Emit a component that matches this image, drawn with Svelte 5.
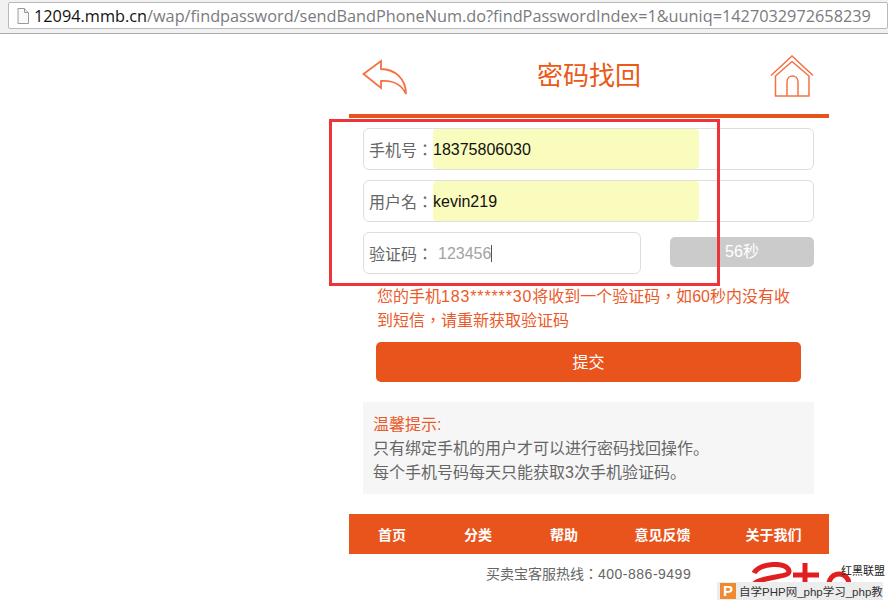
<script>
  const fields = [
    { label: '手机号：', value: '18375806030' },
    { label: '用户名：', value: 'kevin219' }
  ];
  const nav = ['首页', '分类', '帮助', '意见反馈', '关于我们'];
</script>

<div class="urlbar">
  <div class="url">
    <svg class="doc" width="12" height="16" viewBox="0 0 12 16">
      <path d="M1 .5h6.5l4 4v11H1z" fill="#fafafa" stroke="#9a9a9a" />
      <path d="M7.5 .5v4h4" fill="#e4e4e4" stroke="#9a9a9a" />
    </svg>
    <span class="host">12094.mmb.cn</span><span class="rest">/wap/findpassword/sendBandPhoneNum.do?findPasswordIndex=1&amp;uuniq=1427032972658239</span>
  </div>
</div>

<div class="page">
  <header>
    <svg class="back" width="46" height="36" viewBox="0 0 46 36" fill="none" stroke="#f47145" stroke-width="1.8">
      <path d="M1.5 15 L19 2 V10 C33 10 44 20 44 35 C40 26 31 21 19 22 V29 Z" />
    </svg>
    <h1>密码找回</h1>
    <svg class="home" width="44" height="42" viewBox="0 0 44 42" fill="none" stroke="#f47145" stroke-width="1.5">
      <path d="M1 20.5 L22 1 L43 20.5" />
      <path d="M5.5 20.5 V41 H39 V20.5 M22 6.5 L39 21 M22 6.5 L5.5 21" />
      <path d="M17 41 V27 C17 19 28 19 28 27 V41" />
    </svg>
  </header>

  <form>
    {#each fields as f}
      <div class="field">
        <span class="label">{f.label}</span>
        <span class="fill">{f.value}</span>
      </div>
    {/each}
    <div class="code-row">
      <div class="field code">
        <span class="label">验证码：</span>
        <span class="typed">123456</span><i class="caret"></i>
      </div>
      <div class="timer">56秒</div>
    </div>
  </form>

  <p class="notice">您的手机<span class="nums">183******30</span>将收到一个验证码，如60秒内没有收到短信，请重新获取验证码</p>
  <div class="submit">提交</div>

  <div class="tips">
    <div class="tips-title">温馨提示:</div>
    <div>只有绑定手机的用户才可以进行密码找回操作。</div>
    <div>每个手机号码每天只能获取3次手机验证码。</div>
  </div>

  <nav>
    {#each nav as item}
      <span>{item}</span>
    {/each}
  </nav>
  <div class="hotline">买卖宝客服热线：<span class="tel">400-886-9499</span></div>
</div>

<!-- annotation and watermarks sit over the page -->
<div class="redbox"></div>
<svg class="logo" width="100" height="34" viewBox="0 0 100 34" fill="none" stroke="#e02020" stroke-width="5">
  <path d="M3 11 C8 1 36 -1 38 9 C39 16 10 14 3 22" />
  <path d="M54 1 V22 M42 13 H68" />
  <circle cx="88" cy="22" r="10" />
</svg>
<div class="logo-text">红黑联盟</div>
<div class="wm">
  <span class="p">P</span>
  <span class="wm-text">自学PHP网_php学习_php教</span>
</div>

<style>
  :global(body) {
    margin: 0;
    background: #fff;
    overflow: hidden;
  }
  :global(#app) {
    font-family: "Liberation Sans", "Noto Sans CJK SC", sans-serif;
    height: 606px;
    position: relative;
    overflow: hidden;
  }
  .urlbar {
    height: 34px;
    box-sizing: border-box;
    padding: 2px 0 0 8px;
    background: #f1f1f1;
    border-bottom: 1px solid #acacac;
  }
  .url {
    height: 27px;
    box-sizing: border-box;
    background: #fff;
    border: 1px solid #b9b9b9;
    border-radius: 2px;
    display: flex;
    align-items: center;
    padding-left: 8px;
    font-family: "Open Sans", sans-serif;
    font-size: 16.3px;
    white-space: nowrap;
    overflow: hidden;
  }
  .doc {
    margin-right: 5px;
    flex: none;
  }
  .host { color: #111; }
  .rest { color: #7a7a80; }

  .page {
    width: 480px;
    margin-left: 349px;
  }
  header {
    height: 84px;
    box-sizing: border-box;
    border-bottom: 4px solid #e8531d;
    display: flex;
    align-items: center;
    justify-content: space-between;
    padding: 0 15px;
  }
  h1 {
    margin: 0 0 2px;
    font-size: 26px;
    font-weight: normal;
    color: #ea5a16;
  }
  .back { margin: 5px 0 0 -2px; }
  .home { margin-top: 3px; }

  form {
    margin: 10px 15px 0 14px;
    display: flex;
    flex-direction: column;
    gap: 10px;
  }
  .field {
    height: 42px;
    box-sizing: border-box;
    border: 1px solid #dedede;
    border-radius: 6px;
    display: flex;
    align-items: center;
    font-size: 16px;
    color: #666;
    padding-left: 5px;
  }
  .label {
    width: 64px;
    flex: none;
    font-family: "Liberation Sans", "Noto Sans CJK TC", sans-serif;
  }
  .fill {
    width: 266px;
    height: 40px;
    line-height: 42px;
    background: #fafcbd;
    border-radius: 4px;
    color: #111;
  }
  .code-row {
    display: flex;
    justify-content: space-between;
    align-items: center;
  }
  .code { width: 278px; }
  .typed {
    margin-left: 5px;
    padding-top: 2px;
    color: #a3a3a3;
  }
  .caret {
    width: 1px;
    height: 17px;
    background: #555;
  }
  .timer {
    width: 144px;
    height: 30px;
    line-height: 30px;
    margin-top: -2px;
    background: #cbcbcb;
    border-radius: 5px;
    color: #fff;
    font-size: 16px;
    text-align: center;
  }
  .notice {
    margin: 11px 37px 0 28px;
    font-family: "Liberation Sans", "Noto Sans CJK TC", sans-serif;
    font-size: 16px;
    line-height: 24px;
    color: #ea5a2a;
  }
  .nums { letter-spacing: 0.85px; }
  .submit {
    margin: 9px 28px 0 27px;
    height: 40px;
    line-height: 41px;
    background: #e9541d;
    border-radius: 5px;
    color: #fff;
    font-size: 16px;
    text-align: center;
  }
  .tips {
    margin: 20px 15px 0 14px;
    height: 92px;
    box-sizing: border-box;
    padding: 11px 10px 0;
    background: #f6f6f6;
    font-size: 16px;
    line-height: 24px;
    color: #666;
  }
  .tips-title { color: #ea5a2a; }
  nav {
    margin-top: 20px;
    height: 40px;
    background: #e9541d;
    display: grid;
    grid-template-columns: 86px 86px 86px 111px 111px;
    align-items: center;
    text-align: center;
    color: #fff;
    font-size: 14px;
    font-weight: bold;
  }
  .hotline {
    margin-top: 10px;
    padding-left: 137px;
    font-family: "Liberation Sans", "Noto Sans CJK TC", sans-serif;
    font-size: 14px;
    line-height: 20px;
    color: #666;
  }
  .tel { letter-spacing: 0.5px; }

  .redbox {
    position: absolute;
    left: 329px;
    top: 119px;
    width: 391px;
    height: 167px;
    box-sizing: border-box;
    border: 3px solid #ee3438;
  }
  .logo {
    position: absolute;
    left: 751px;
    top: 562px;
  }
  .logo-text {
    position: absolute;
    left: 841px;
    top: 564px;
    font-size: 11px;
    line-height: 14px;
    color: #222;
    white-space: nowrap;
  }
  .wm {
    position: absolute;
    left: 717px;
    top: 582px;
    width: 166px;
    height: 18px;
    background: #ededed;
    display: flex;
    align-items: center;
    white-space: nowrap;
  }
  .p {
    width: 16px;
    height: 16px;
    line-height: 16px;
    margin: 0 3px 0 3px;
    background: #f08a30;
    color: #fff;
    font-size: 15px;
    font-weight: bold;
    text-align: center;
    flex: none;
  }
  .wm-text {
    font-size: 11.5px;
    color: #333;
  }
</style>
